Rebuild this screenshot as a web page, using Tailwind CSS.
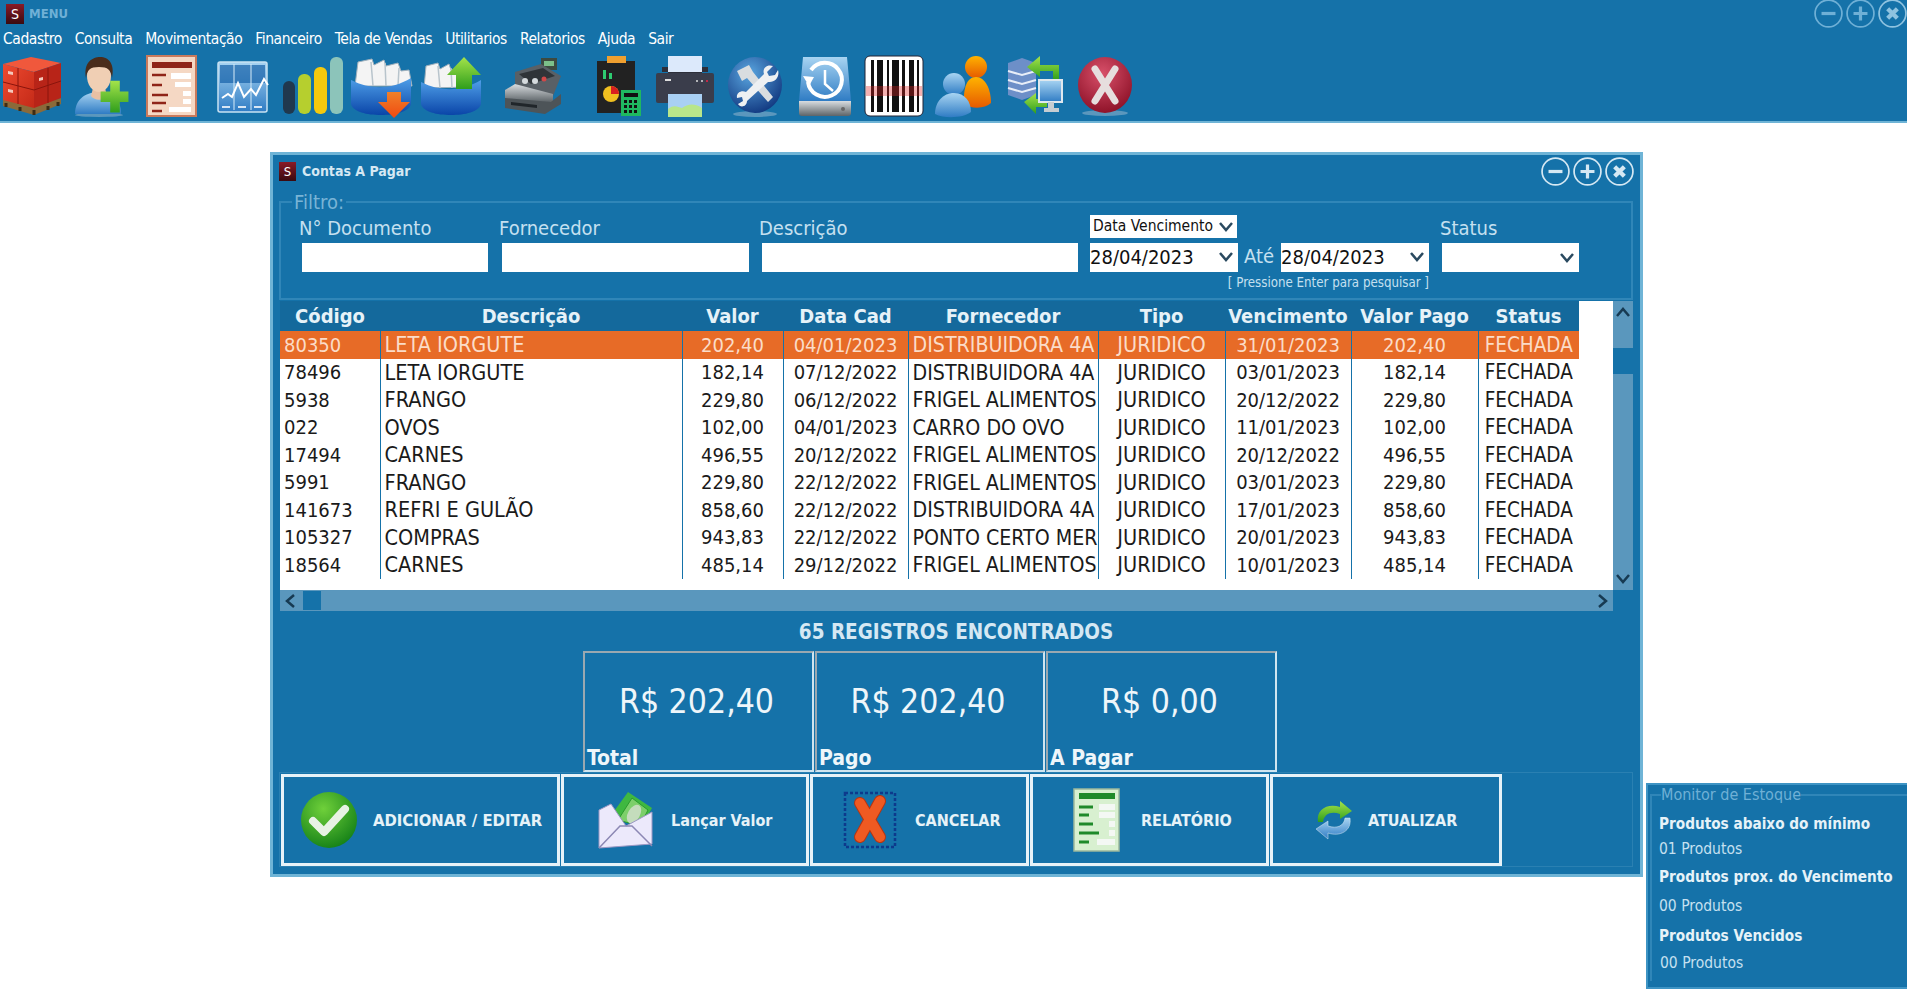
<!DOCTYPE html>
<html lang="en">

<head>
    <meta charset="UTF-8">
    <title>Contas A Pagar</title>
    <script src="https://cdn.jsdelivr.net/npm/@tailwindcss/browser@4"></script>
</head>

<body class="relative h-[991px] w-[1907px] overflow-hidden bg-white font-['DejaVu_Sans',sans-serif] font-stretch-condensed text-black">
    <svg class="absolute h-0 w-0">
        <defs>
            <linearGradient id="blue" x1="0" y1="0" x2="0" y2="1"><stop offset="0" stop-color="#4f9fe8" /><stop offset="1" stop-color="#0a45a8" /></linearGradient>
            <linearGradient id="red" x1="0" y1="0" x2="1" y2="1"><stop offset="0" stop-color="#ee4a30" /><stop offset="1" stop-color="#c42a18" /></linearGradient>
            <linearGradient id="grn" x1="0" y1="0" x2="0" y2="1"><stop offset="0" stop-color="#a4e34a" /><stop offset="1" stop-color="#2f9e1c" /></linearGradient>
            <linearGradient id="org" x1="0" y1="0" x2="0" y2="1"><stop offset="0" stop-color="#ffb300" /><stop offset="1" stop-color="#e65a00" /></linearGradient>
            <linearGradient id="arrowO" x1="0" y1="0" x2="0" y2="1"><stop offset="0" stop-color="#f0802a" /><stop offset="1" stop-color="#f04a10" /></linearGradient>
            <linearGradient id="sky" x1="0" y1="0" x2="0" y2="1"><stop offset="0" stop-color="#a8d4f2" /><stop offset="1" stop-color="#2f7cc4" /></linearGradient>
            <radialGradient id="ballB" cx=".4" cy=".3" r=".8"><stop offset="0" stop-color="#5aa6e0" /><stop offset="1" stop-color="#0b2f78" /></radialGradient>
            <radialGradient id="ballR" cx=".45" cy=".3" r=".8"><stop offset="0" stop-color="#d8506a" /><stop offset="1" stop-color="#850a20" /></radialGradient>
            <radialGradient id="ballG" cx=".4" cy=".3" r=".8"><stop offset="0" stop-color="#6fd03a" /><stop offset="1" stop-color="#0d7a14" /></radialGradient>
            <linearGradient id="metal" x1="0" y1="0" x2="0" y2="1"><stop offset="0" stop-color="#d9dde0" /><stop offset="1" stop-color="#5d6468" /></linearGradient>
        </defs>
    </svg>

    <!-- Top bar -->
    <header class="h-[123px] border-b-2 border-[#6fb4d6] bg-[#1572a9]">
        <div class="flex h-[27px] items-center justify-between pl-[6px]">
            <div class="flex items-center gap-[5px]">
                <span class="flex h-[20px] w-[18px] items-center justify-center bg-linear-to-b from-[#8a1a26] to-[#3a0a10] text-[14px] leading-none text-white">S</span>
                <span class="text-[13px] font-bold text-[#6fb0d6]">MENU</span>
            </div>
            <div class="flex gap-[3px]">
                <svg class="h-[29px] w-[29px]" viewBox="0 0 27 27" fill="none" stroke="#6fb0d6"><circle cx="13.5" cy="13.5" r="12.5" stroke-width="1.6" /><path d="M7 13.5h13" stroke-width="3" /></svg>
                <svg class="h-[29px] w-[29px]" viewBox="0 0 27 27" fill="none" stroke="#6fb0d6"><circle cx="13.5" cy="13.5" r="12.5" stroke-width="1.6" /><path d="M7 13.5h13M13.5 7v13" stroke-width="3" /></svg>
                <svg class="h-[29px] w-[29px]" viewBox="0 0 27 27" fill="none" stroke="#8fc3e0"><circle cx="13.5" cy="13.5" r="12.5" stroke-width="1.6" /><path d="M9 9l9 9M18 9l-9 9" stroke-width="4" /></svg>
            </div>
        </div>

        <nav class="flex h-[26px] items-center gap-[13px] pl-[3px] text-[15.5px] tracking-[-0.45px] text-white">
            <span>Cadastro</span><span>Consulta</span><span>Movimentação</span><span>Financeiro</span><span>Tela de Vendas</span><span>Utilitarios</span><span>Relatorios</span><span>Ajuda</span><span>Sair</span>
        </nav>

        <!-- Toolbar -->
        <div class="flex h-[66px] items-center [&_svg]:h-[64px] [&_svg]:w-[64px] [&_svg]:shrink-0">
            <svg viewBox="0 0 64 64">
                <path d="M3 44l31 8 27-8v6L34 61 3 52z" fill="#8a6a3a" />
                <path d="M6 53v-4M20 57v-4M34 61v-5M48 56v-4M58 52v-4" stroke="#3d2c14" stroke-width="3" />
                <path d="M3 10l28-7 30 6-27 9z" fill="#f0583c" />
                <path d="M3 10l31 8v36L3 46z" fill="url(#red)" />
                <path d="M34 18l27-9v35l-27 10z" fill="#b82418" />
                <path d="M3 28l31 8 27-9M18 14v36M48 14v35" fill="none" stroke="#8a140c" stroke-width="1" />
                <path d="M8 17l5 1v3l-5-1zM39 24l4-1v3l-4 1zM8 35l5 1v3l-5-1z" fill="#f4c8bc" />
            </svg>
            <svg class="ml-[7px]" viewBox="0 0 64 64">
                <ellipse cx="28" cy="61" rx="24" ry="2" fill="#5b97bd" />
                <path d="M4 60c0-16 12-22 24-22s22 6 22 22z" fill="url(#sky)" />
                <path d="M22 34h12l2 8c-4 5-12 5-16 0z" fill="#e8c0a4" />
                <ellipse cx="28" cy="22" rx="12" ry="16" fill="#f0cfb4" />
                <path d="M15 24C12 8 22 3 29 3c9 0 15 7 12 21-1-8-4-11-13-11s-12 3-13 11z" fill="#4a2d1c" />
                <path d="M35 40h10V29h10v11h9v11H55v11H45V51H35z" fill="url(#grn)" transform="translate(-4 -1) scale(.96)" />
            </svg>
            <svg class="ml-[4px]" viewBox="0 0 64 64">
                <rect x="8" y="2" width="49" height="60" fill="#f5d8c4" stroke="#c97a5c" stroke-width="2" />
                <rect x="13" y="8" width="40" height="6" fill="#8f2418" />
                <path d="M13 21h14M13 31h10M13 41h16M13 49h14M13 57h10" stroke="#8f2418" stroke-width="2.5" />
                <path d="M32 19h20v6H32zM36 28h16v5H36zM44 37h8v5h-8zM44 45h8v5h-8zM30 53h22v5H30z" fill="#fff" />
            </svg>
            <svg class="ml-[7px]" viewBox="0 0 64 64">
                <rect x="8" y="8" width="49" height="50" rx="2" fill="url(#sky)" stroke="#c8e2f2" stroke-width="1.5" />
                <rect x="10" y="11" width="45" height="18" fill="#1561a8" opacity=".7" />
                <path d="M24 10v46M41 10v46" stroke="#d8ecf8" stroke-width="1" />
                <path d="M12 44l6-4 4 3 6-14 6 14 7-8 5 6 8-16 4 6" fill="none" stroke="#fff" stroke-width="2" />
                <path d="M12 53h8M28 53h8M44 53h8" stroke="#fff" stroke-width="2" opacity=".8" />
            </svg>
            <svg class="ml-[6px]" viewBox="0 0 64 64">
                <rect x="3" y="27" width="12" height="33" rx="6" fill="#20384e" />
                <rect x="18" y="20" width="13" height="40" rx="6" fill="#b6cf2e" />
                <rect x="34" y="13" width="13" height="47" rx="6" fill="#f4c90e" />
                <rect x="50" y="3" width="13" height="57" rx="6" fill="#8cc4ba" />
            </svg>
            <svg class="ml-[5px]" viewBox="0 0 64 64">
                <path d="M6 32L9 8l14-3 2 6 10-5 2 6 12-3 3 8 8-1 3 16z" fill="#f4f4f4" stroke="#9fb0bc" />
                <path d="M22 8l2 24M36 9l1 23M50 14l-1 18" stroke="#b8c4cc" stroke-width="1.5" />
                <path d="M2 26c20 10 40 10 60-2v26c-2 8-16 11-30 11S4 58 2 50z" fill="url(#blue)" />
                <path d="M38 38h14v10h9L45 64 29 48h9z" fill="url(#arrowO)" />
            </svg>
            <svg class="ml-[6px]" viewBox="0 0 64 64">
                <path d="M5 34L7 12l12-3 2 6 9-5 2 6 14-3 6 20z" fill="#f4f4f4" stroke="#9fb0bc" />
                <path d="M19 12l2 22M32 14l1 20" stroke="#b8c4cc" stroke-width="1.5" />
                <path d="M2 28c20 10 40 10 60-2v24c-2 8-16 11-30 11S4 58 2 50z" fill="url(#blue)" />
                <path d="M45 3l17 18h-9v14H37V21h-9z" fill="url(#grn)" />
            </svg>
            <svg class="ml-[18px]" viewBox="0 0 64 64">
                <path d="M40 4h16v12H40z" fill="#3d4a40" /><path d="M43 7h10v5H43z" fill="#7cc08a" />
                <path d="M14 18l26-8 20 12-8 20-38-6z" fill="#596066" />
                <path d="M18 20l24-6 12 8-24 8z" fill="#2f3438" />
                <circle cx="24" cy="27" r="3" fill="#d5dadd" /><circle cx="34" cy="27" r="3" fill="#d5dadd" /><circle cx="43" cy="25" r="2.5" fill="#d04848" />
                <path d="M4 36l10-6 38 10v8L4 48z" fill="url(#metal)" />
                <path d="M4 44l46 4 10-8v10L44 60 4 54z" fill="#4d5458" />
                <path d="M10 48l26 3v3l-26-3z" fill="#20262a" />
            </svg>
            <svg class="ml-[20px]" viewBox="0 0 64 64">
                <rect x="12" y="7" width="38" height="52" fill="#222" />
                <rect x="22" y="2" width="19" height="7" fill="#f0a030" />
                <rect x="18" y="16" width="3" height="9" fill="#2ecc71" /><rect x="24" y="19" width="3" height="6" fill="#2ecc71" />
                <circle cx="26" cy="40" r="8" fill="#f0c020" /><path d="M26 32a8 8 0 0 1 8 8h-8z" fill="#d82020" />
                <rect x="36" y="36" width="20" height="26" fill="#1fb860" />
                <rect x="39" y="39" width="14" height="4" fill="#111" />
                <path d="M39 46h3v3h-3zM44 46h3v3h-3zM49 46h3v3h-3zM39 51h3v3h-3zM44 51h3v3h-3zM49 51h3v3h-3zM39 56h3v3h-3zM44 56h3v3h-3zM49 56h3v3h-3z" fill="#111" />
            </svg>
            <svg class="ml-[4px]" viewBox="0 0 64 64">
                <rect x="15" y="2" width="34" height="28" fill="#dce9fb" />
                <path d="M9 13h6v8h34v-8h6v5H9z" fill="#2d2f3a" />
                <rect x="3" y="19" width="58" height="30" rx="2" fill="#3a3d4b" />
                <rect x="12" y="25" width="6" height="2" fill="#ddd" /><circle cx="44" cy="27" r="1" fill="#ddd" /><circle cx="49" cy="27" r="1" fill="#ddd" /><circle cx="54" cy="27" r="1" fill="#e24" />
                <rect x="15" y="40" width="34" height="23" fill="#a9d0f4" />
                <path d="M15 55c6-5 10-2 14-1 6-4 12-5 20 0v9H15z" fill="#b8e68a" />
            </svg>
            <svg class="ml-[6px]" viewBox="0 0 64 64">
                <ellipse cx="32" cy="60" rx="22" ry="3" fill="#5b97bd" />
                <ellipse cx="32" cy="31" rx="27" ry="28" fill="url(#ballB)" />
                <path d="M14 17l12-6 4 7 20 25-5 5-21-24-5 3z" fill="#d9dde0" />
                <path d="M50 12l-6 6 2 4 6-1 3-5c2 7-3 13-10 12L24 47c0 6-7 7-9 3l5-3-1-4-5 1c-1-5 4-8 9-6l18-18c-2-6 3-10 9-8z" fill="#eef0f2" />
            </svg>
            <svg class="ml-[6px]" viewBox="0 0 64 64">
                <path d="M10 3h44l4 44H6z" fill="url(#sky)" />
                <path d="M6 47h52v12a3 3 0 0 1-3 3H9a3 3 0 0 1-3-3z" fill="url(#metal)" />
                <circle cx="50" cy="55" r="2" fill="#666" />
                <path d="M18 16a17 17 0 1 1-3 12" fill="none" stroke="#fff" stroke-width="4" />
                <path d="M10 22l11 1-5 9z" fill="#fff" />
                <path d="M32 16v14l8 7" fill="none" stroke="#fff" stroke-width="2.5" />
            </svg>
            <svg class="ml-[5px]" viewBox="0 0 64 64">
                <rect x="3" y="2" width="58" height="60" rx="5" fill="#fff" stroke="#223" stroke-width="1" />
                <path d="M9 6v52h3V6zM15 6v52h6V6zM25 6v52h2V6zM30 6v52h7V6zM40 6v52h3V6zM47 6v52h5V6zM55 6v52h2V6z" fill="#111" />
                <rect x="4" y="32" width="56" height="10" fill="#e02020" opacity=".35" />
            </svg>
            <svg class="ml-[6px]" viewBox="0 0 64 64">
                <circle cx="44" cy="13" r="11" fill="url(#org)" />
                <path d="M32 50c-1-16 3-27 12-27s15 12 15 26c-6 6-20 6-27 1z" fill="url(#org)" />
                <circle cx="22" cy="30" r="11" fill="url(#sky)" />
                <path d="M3 60c0-12 8-21 19-21s17 9 17 19c-8 6-26 7-36 2z" fill="url(#sky)" />
            </svg>
            <svg class="ml-[6px]" viewBox="0 0 64 64">
                <path d="M6 9l14-5 14 5v32L20 46 6 41z" fill="#6d8fc8" />
                <path d="M6 17l14 4 14-4M6 26l14 4 14-4M6 34l14 4 14-4" fill="none" stroke="#e8eef8" stroke-width="2" />
                <path d="M38 2l-13 11 13 10v-6h13v9h6V11H38z" fill="url(#grn)" />
                <path d="M22 48l12-9v6h11v8H34v7z" fill="url(#grn)" />
                <rect x="37" y="26" width="23" height="22" fill="url(#sky)" stroke="#dfe8ee" stroke-width="2" />
                <path d="M46 48h6v6h5v4H42v-4h4z" fill="#c5cdd2" />
            </svg>
            <svg class="ml-[7px]" viewBox="0 0 64 64">
                <ellipse cx="32" cy="59" rx="23" ry="3" fill="#5b97bd" />
                <ellipse cx="32" cy="31" rx="27" ry="28" fill="url(#ballR)" />
                <path d="M22 15l20 32M42 15L22 47" stroke="#e6dede" stroke-width="7" stroke-linecap="round" />
            </svg>
        </div>
    </header>

    <!-- Contas A Pagar window -->
    <main class="ml-[270px] mt-[29px] h-[725px] w-[1373px] border-[3px] border-[#6fb4d6] bg-[#1572a9] pl-[6px] pr-[7px]">
        <div class="flex h-[34px] items-center justify-between">
            <div class="flex items-center gap-[6px] pb-px">
                <span class="flex h-[19px] w-[17px] items-center justify-center bg-linear-to-b from-[#8a1a26] to-[#3a0a10] text-[13px] leading-none text-white">S</span>
                <span class="text-[14px] font-bold text-[#d5e8f3]">Contas A Pagar</span>
            </div>
            <div class="mb-[2px] mr-[-1px] flex gap-[3px]">
                <svg class="h-[29px] w-[29px]" viewBox="0 0 27 27" fill="none" stroke="#d5e8f3"><circle cx="13.5" cy="13.5" r="12.5" stroke-width="1.6" /><path d="M7 13.5h13" stroke-width="3" /></svg>
                <svg class="h-[29px] w-[29px]" viewBox="0 0 27 27" fill="none" stroke="#d5e8f3"><circle cx="13.5" cy="13.5" r="12.5" stroke-width="1.6" /><path d="M7 13.5h13M13.5 7v13" stroke-width="3" /></svg>
                <svg class="h-[29px] w-[29px]" viewBox="0 0 27 27" fill="none" stroke="#d5e8f3"><circle cx="13.5" cy="13.5" r="12.5" stroke-width="1.6" /><path d="M9 9l9 9M18 9l-9 9" stroke-width="4" /></svg>
            </div>
        </div>

        <!-- Filtro -->
        <fieldset class="h-[111px] border-2 border-[#3086b8] pl-[21px]">
            <legend class="ml-[-10px] px-[2px] text-[20px] leading-[26px] text-[#79b4d6]">Filtro:</legend>
            <div class="flex h-[57px] items-end text-[20px] text-[#c5e0f0]">
                <label class="flex w-[200px] flex-col">
                    <span class="ml-[-3px] h-[28px] leading-[26px]">N° Documento</span>
                    <input class="h-[29px] w-[186px] bg-white">
                </label>
                <label class="flex w-[260px] flex-col">
                    <span class="ml-[-3px] h-[28px] leading-[26px]">Fornecedor</span>
                    <input class="h-[29px] w-[247px] bg-white">
                </label>
                <label class="flex w-[328px] flex-col">
                    <span class="ml-[-3px] h-[28px] leading-[26px]">Descrição</span>
                    <input class="h-[29px] w-[316px] bg-white">
                </label>
                <div class="flex w-[154px] flex-col gap-[5px]">
                    <div class="flex h-[23px] w-[147px] items-center justify-between bg-white pl-[3px] pr-[4px] text-[15.5px] text-[#111]">Data Vencimento
                        <svg class="h-[10px] w-[14px]" viewBox="0 0 14 10" fill="none" stroke="#2a4a60" stroke-width="2.5"><path d="M1 1l6 7 6-7" /></svg>
                    </div>
                    <div class="flex h-[29px] w-[148px] items-center justify-between bg-white pb-[2px] pr-[5px] text-[20px] text-[#111]">28/04/2023
                        <svg class="h-[10px] w-[14px]" viewBox="0 0 14 10" fill="none" stroke="#2a4a60" stroke-width="2.5"><path d="M1 1l6 7 6-7" /></svg>
                    </div>
                </div>
                <span class="h-[29px] w-[37px] leading-[27px]">Até</span>
                <div class="mr-[13px] flex h-[29px] w-[148px] items-center justify-between bg-white pb-[2px] pr-[5px] text-[20px] text-[#111]">28/04/2023
                    <svg class="h-[10px] w-[14px]" viewBox="0 0 14 10" fill="none" stroke="#2a4a60" stroke-width="2.5"><path d="M1 1l6 7 6-7" /></svg>
                </div>
                <label class="flex w-[137px] flex-col">
                    <span class="ml-[-2px] h-[28px] leading-[26px]">Status</span>
                    <span class="flex h-[29px] items-center justify-end bg-white pr-[5px]">
                        <svg class="h-[10px] w-[14px]" viewBox="0 0 14 10" fill="none" stroke="#2a4a60" stroke-width="2.5"><path d="M1 1l6 7 6-7" /></svg>
                    </span>
                </label>
            </div>
            <p class="mr-[202px] mt-[1px] text-right text-[13.2px] leading-[20px] text-[#c5e0f0]">[ Pressione Enter para pesquisar ]</p>
        </fieldset>

        <!-- Grid -->
        <div class="ml-px mt-px flex h-[310px] flex-wrap content-start">
            <div class="h-[289px] w-[1333px] bg-white">
                <table class="w-[1299px] table-fixed border-collapse text-[20px] [&_td]:h-[27.5px] [&_td]:overflow-hidden [&_td]:whitespace-nowrap [&_td]:border-l [&_td]:border-[#1572a9] [&_td]:px-[4px] [&_td]:leading-none [&_td:first-child]:border-l-0 [&_th]:font-bold">
                    <colgroup>
                        <col class="w-[100px]"><col class="w-[302px]"><col class="w-[101px]"><col class="w-[125px]"><col class="w-[190px]"><col class="w-[127px]"><col class="w-[126px]"><col class="w-[127px]"><col class="w-[101px]">
                    </colgroup>
                    <thead class="bg-[#14699c] text-[#e6f2f8]">
                        <tr class="h-[30px]"><th>Código</th><th>Descrição</th><th>Valor</th><th>Data Cad</th><th>Fornecedor</th><th>Tipo</th><th>Vencimento</th><th>Valor Pago</th><th>Status</th></tr>
                    </thead>
                    <tbody class="text-[#1a1a1a] [&_td:nth-child(2)]:text-[21.5px] [&_td:nth-child(3)]:text-center [&_td:nth-child(4)]:text-center [&_td:nth-child(5)]:pr-0 [&_td:nth-child(5)]:text-[21.2px] [&_td:nth-child(6)]:text-center [&_td:nth-child(6)]:text-[21.5px] [&_td:nth-child(7)]:text-center [&_td:nth-child(8)]:text-center [&_td:nth-child(9)]:text-center [&_td:nth-child(9)]:text-[20.5px]">
                        <tr class="bg-[#e76b27] text-[#fbdcc8]"><td>80350</td><td>LETA IORGUTE</td><td>202,40</td><td>04/01/2023</td><td>DISTRIBUIDORA 4A</td><td>JURIDICO</td><td>31/01/2023</td><td>202,40</td><td>FECHADA</td></tr>
                        <tr><td>78496</td><td>LETA IORGUTE</td><td>182,14</td><td>07/12/2022</td><td>DISTRIBUIDORA 4A</td><td>JURIDICO</td><td>03/01/2023</td><td>182,14</td><td>FECHADA</td></tr>
                        <tr><td>5938</td><td>FRANGO</td><td>229,80</td><td>06/12/2022</td><td>FRIGEL ALIMENTOS</td><td>JURIDICO</td><td>20/12/2022</td><td>229,80</td><td>FECHADA</td></tr>
                        <tr><td>022</td><td>OVOS</td><td>102,00</td><td>04/01/2023</td><td>CARRO DO OVO</td><td>JURIDICO</td><td>11/01/2023</td><td>102,00</td><td>FECHADA</td></tr>
                        <tr><td>17494</td><td>CARNES</td><td>496,55</td><td>20/12/2022</td><td>FRIGEL ALIMENTOS</td><td>JURIDICO</td><td>20/12/2022</td><td>496,55</td><td>FECHADA</td></tr>
                        <tr><td>5991</td><td>FRANGO</td><td>229,80</td><td>22/12/2022</td><td>FRIGEL ALIMENTOS</td><td>JURIDICO</td><td>03/01/2023</td><td>229,80</td><td>FECHADA</td></tr>
                        <tr><td>141673</td><td>REFRI E GULÃO</td><td>858,60</td><td>22/12/2022</td><td>DISTRIBUIDORA 4A</td><td>JURIDICO</td><td>17/01/2023</td><td>858,60</td><td>FECHADA</td></tr>
                        <tr><td>105327</td><td>COMPRAS</td><td>943,83</td><td>22/12/2022</td><td>PONTO CERTO MER</td><td>JURIDICO</td><td>20/01/2023</td><td>943,83</td><td>FECHADA</td></tr>
                        <tr><td>18564</td><td>CARNES</td><td>485,14</td><td>29/12/2022</td><td>FRIGEL ALIMENTOS</td><td>JURIDICO</td><td>10/01/2023</td><td>485,14</td><td>FECHADA</td></tr>
                    </tbody>
                </table>
            </div>
            <!-- Vertical scrollbar -->
            <div class="relative flex h-[289px] w-[20px] flex-col items-center justify-between bg-[#5a97bd] py-[6px]">
                <svg class="h-[10px] w-[14px]" viewBox="0 0 14 10" fill="none" stroke="#173a52" stroke-width="2.5"><path d="M1 9l6-7 6 7" /></svg>
                <span class="absolute left-0 top-[47px] h-[26px] w-[20px] bg-[#1572a9]"></span>
                <svg class="h-[10px] w-[14px]" viewBox="0 0 14 10" fill="none" stroke="#173a52" stroke-width="2.5"><path d="M1 1l6 7 6-7" /></svg>
            </div>
            <!-- Horizontal scrollbar -->
            <div class="flex h-[21px] w-[1333px] items-center justify-between bg-[#5a97bd] px-[5px]">
                <div class="flex items-center gap-[8px]">
                    <svg class="h-[14px] w-[10px]" viewBox="0 0 10 14" fill="none" stroke="#173a52" stroke-width="2.5"><path d="M9 1L2 7l7 6" /></svg>
                    <span class="h-[19px] w-[18px] bg-[#1572a9]"></span>
                </div>
                <svg class="h-[14px] w-[10px]" viewBox="0 0 10 14" fill="none" stroke="#173a52" stroke-width="2.5"><path d="M1 1l7 6-7 6" /></svg>
            </div>
        </div>

        <h2 class="h-[40px] text-center text-[20.5px] font-bold leading-[42px] text-[#d5e8f3]">65 REGISTROS ENCONTRADOS</h2>

        <!-- Totals -->
        <div class="ml-[304px] flex h-[121px] gap-px">
            <div class="flex w-[231px] flex-col border-2 border-[#cfe5f0] border-l-[#9aa8b0] border-t-[#9aa8b0] pl-[2px] pr-[6px]">
                <span class="mt-[24px] h-[50px] text-center text-[33.5px] leading-[50px] text-[#eef6fa]">R$ 202,40</span>
                <span class="mt-auto text-[21px] font-bold leading-[24px] text-[#eef6fa]">Total</span>
            </div>
            <div class="flex w-[230px] flex-col border-2 border-[#cfe5f0] border-l-[#9aa8b0] border-t-[#9aa8b0] pl-[2px] pr-[6px]">
                <span class="mt-[24px] h-[50px] text-center text-[33.5px] leading-[50px] text-[#eef6fa]">R$ 202,40</span>
                <span class="mt-auto text-[21px] font-bold leading-[24px] text-[#eef6fa]">Pago</span>
            </div>
            <div class="flex w-[231px] flex-col border-2 border-[#cfe5f0] border-l-[#9aa8b0] border-t-[#9aa8b0] pl-[2px] pr-[6px]">
                <span class="mt-[24px] h-[50px] text-center text-[33.5px] leading-[50px] text-[#eef6fa]">R$ 0,00</span>
                <span class="mt-auto text-[21px] font-bold leading-[24px] text-[#eef6fa]">A Pagar</span>
            </div>
        </div>

        <!-- Actions -->
        <div class="flex h-[95px] gap-px border border-[#2a80b2] pl-px pt-px text-[16px] font-bold leading-[26px] text-[#e6f2f8]">
            <button class="flex h-[92px] w-[279px] items-center border-[3px] border-[#e6f2f8] pl-[16px] text-[16.5px]">
                <svg class="mr-[15px] h-[58px] w-[58px]" viewBox="0 0 58 58"><circle cx="29" cy="29" r="28" fill="url(#ballG)" /><path d="M13 30l11 11 21-23" fill="none" stroke="#e8f2e4" stroke-width="8" stroke-linecap="round" stroke-linejoin="round" /></svg>
                <span class="pt-[2px]">ADICIONAR / EDITAR</span>
            </button>
            <button class="flex h-[92px] w-[248px] items-center border-[3px] border-[#e6f2f8] pl-[34px]">
                <svg class="mr-[17px] h-[60px] w-[56px]" viewBox="0 0 56 60">
                    <path d="M14 24L30 2l24 16-10 18z" fill="#3fb840" /><path d="M20 30L34 8l16 12-8 16z" fill="#7ccf6a" stroke="#2a9a2c" />
                    <ellipse cx="36" cy="24" rx="6" ry="10" fill="#c4dcbc" transform="rotate(30 36 24)" />
                    <path d="M1 20l12-6 15 22 26-14v32L1 58z" fill="#ece9fb" stroke="#9c98c4" />
                    <path d="M1 58l21-22h12l20 20" fill="none" stroke="#8c88b4" stroke-width="1.5" />
                </svg>
                <span class="pt-[2px]">Lançar Valor</span>
            </button>
            <button class="flex h-[92px] w-[219px] items-center border-[3px] border-[#e6f2f8] pl-[30px]">
                <svg class="mr-[18px] h-[58px] w-[54px]" viewBox="0 0 54 58">
                    <rect x="2" y="2" width="50" height="54" fill="none" stroke="#0d3a8c" stroke-width="2.5" stroke-dasharray="3 2" />
                    <path d="M17 12l20 34M37 10L17 46" stroke="#b83410" stroke-width="12" stroke-linecap="round" />
                    <path d="M17 12l20 34M37 10L17 46" stroke="#ef5a22" stroke-width="10" stroke-linecap="round" />
                </svg>
                <span class="pt-[2px]">CANCELAR</span>
            </button>
            <button class="flex h-[92px] w-[239px] items-center border-[3px] border-[#e6f2f8] pl-[40px]">
                <svg class="mr-[19px] h-[64px] w-[49px]" viewBox="0 0 49 64">
                    <rect x="1" y="1" width="45" height="62" fill="#d8f0d0" stroke="#9cb89c" stroke-width="1.5" />
                    <rect x="6" y="5" width="36" height="6" fill="#1f8a2a" />
                    <path d="M6 19h14M6 27h10M6 36h14M6 45h20M6 54h10" stroke="#1f8a2a" stroke-width="3" />
                    <path d="M26 16h16v6H26zM26 24h16v6H26zM36 33h6v6h-6zM36 42h6v6h-6zM24 51h18v6H24z" fill="#f4f8f4" />
                </svg>
                <span class="pt-[2px]">RELATÓRIO</span>
            </button>
            <button class="flex h-[92px] w-[232px] items-center border-[3px] border-[#e6f2f8] pl-[42px]">
                <svg class="mr-[15px] h-[40px] w-[38px]" viewBox="0 0 38 40">
                    <path d="M3 22C1 9 13 3 25 7V1l12 10-12 8v-5c-9-3-16 0-17 8z" fill="url(#grn)" />
                    <path d="M35 18c2 13-10 19-22 15v6L1 29l12-8v5c9 3 16 0 17-8z" fill="url(#sky)" stroke="#dfeaf2" stroke-width=".5" />
                </svg>
                <span class="pt-[2px]">ATUALIZAR</span>
            </button>
        </div>
    </main>

    <!-- Monitor de Estoque -->
    <aside class="absolute left-[1646px] top-[783px] h-[206px] w-[261px] border-2 border-r-0 border-[#3e94c4] bg-[#1572a9] pl-[9px]">
        <fieldset class="ml-[-7px] h-[196px] border-2 border-r-0 border-b-0 border-[#3086b8] pl-[7px]">
            <legend class="ml-[2px] text-[16px] leading-[20px] text-[#6fb0d6]">Monitor de Estoque</legend>
            <p class="mt-[7px] text-[15.2px] font-bold leading-[24px] text-[#e6f2f8]">Produtos abaixo do mínimo</p>
            <p class="mt-px text-[15.5px] leading-[24px] text-[#c5e0f0]">01 Produtos</p>
            <p class="mt-[4px] text-[15.2px] font-bold leading-[24px] text-[#e6f2f8]">Produtos prox. do Vencimento</p>
            <p class="mt-[5px] text-[15.5px] leading-[24px] text-[#c5e0f0]">00 Produtos</p>
            <p class="mt-[6px] text-[15.2px] font-bold leading-[24px] text-[#e6f2f8]">Produtos Vencidos</p>
            <p class="ml-px mt-[3px] text-[15.5px] leading-[24px] text-[#c5e0f0]">00 Produtos</p>
        </fieldset>
    </aside>
</body>

</html>
